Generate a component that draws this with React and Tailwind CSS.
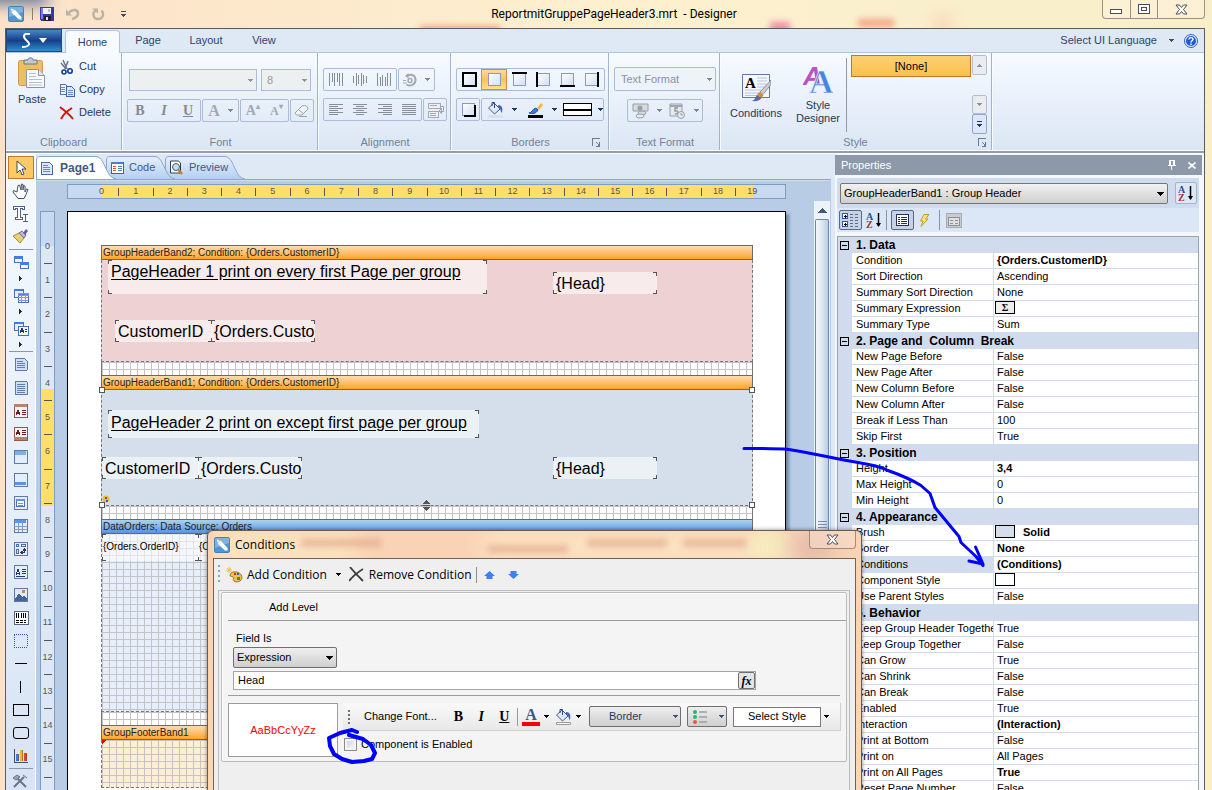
import React, { useState } from 'react';

const Icon = ({ w = 16, h = 16, crisp = true, className = '', children }) => (
  <svg
    width={w}
    height={h}
    viewBox={`0 0 ${w} ${h}`}
    fill="none"
    shapeRendering={crisp ? 'crispEdges' : 'auto'}
    className={`shrink-0 ${className}`}
    aria-hidden="true"
  >
    {children}
  </svg>
);

const Caret = ({ color = '#3b4f70', className = '' }) => (
  <Icon w={5} h={3} className={className}>
    <path d="M0 0h5v1H0zM1 1h3v1H1zM2 2h1v1H2z" fill={color} />
  </Icon>
);

const AppIcon = () => (
  <Icon w={16} h={16} crisp={false}>
    <rect x="0.5" y="0.5" width="15" height="15" rx="1.500" fill="#5296cf" stroke="#4482b8" />
    <path d="M1 1h14v5L1 11z" fill="#a5cbe8" opacity="0.55" />
    <path d="M3 2.500l4 1.500 6.500 7v2.500H11L4 7z" fill="#fff" />
    <path d="M3 6.500L6.500 3" stroke="#7fb2da" strokeWidth="0.800" />
  </Icon>
);

/* ---------- title bar ---------- */

const CloseGlyph = () => (
  <Icon w={13} h={11} crisp={false}>
    <path d="M1 1h3.500l2 2.500 2-2.500H12L8.500 5.500 12 10H8.500l-2-2.500-2 2.500H1l3.500-4.500z" fill="#fff" stroke="#4c4c5c" />
  </Icon>
);

const TitleBar = () => (
  <header className="relative flex h-7 shrink-0 items-center px-2">
    <div className="pointer-events-none absolute inset-0 overflow-hidden">
      <div className="absolute -left-4 -top-4 h-5 w-16 bg-[#5f7396] blur-sm" />
      <div className="absolute left-[420px] top-[26px] h-2 w-20 bg-[#f0a080] blur-[3px]" />
      <div className="absolute left-[770px] top-[22px] h-3 w-5 bg-[#ee8fa8] blur-[3px]" />
      <div className="absolute left-[858px] top-[19px] h-2 w-9 bg-[#f3a488] blur-[3px]" />
      <div className="absolute left-[935px] top-4 h-4 w-4 bg-[#f9cdb0] blur-sm" />
    </div>
    <div className="relative flex items-center">
      <AppIcon />
      <span className="ml-2 h-3 w-px bg-[#8a7f70]" />
      <button aria-label="Save" className="ml-[7px]">
        <Icon w={14} h={14}>
          <path d="M0 0h14v14H1L0 13z" fill="#3a35a8" />
          <path d="M1 1h2v11H1z" fill="#7d7be0" />
          <path d="M3 1h8v6H3z" fill="#f3f5fb" />
          <path d="M8 2h2v3H8z" fill="#b8bdd2" />
          <path d="M4 9h7v5H4z" fill="#20202c" />
          <path d="M6 10h2v3H6z" fill="#dfe2ee" />
        </Icon>
      </button>
      <button aria-label="Undo" className="ml-3">
        <Icon w={14} h={14} crisp={false}>
          <path d="M3 5.500c4-4 9-3 9 1C12 9.500 9.500 11 6 12" stroke="#bab2a3" strokeWidth="2.500" />
          <path d="M0 2.500v6h6z" fill="#bab2a3" />
        </Icon>
      </button>
      <button aria-label="Redo" className="ml-3">
        <Icon w={13} h={14} crisp={false}>
          <path d="M3.500 3.500C0 6 1 12 6 12c5 0 6.500-5 3.500-8.500" stroke="#bab2a3" strokeWidth="2.300" />
          <path d="M0 1.500h6v5z" fill="#bab2a3" />
        </Icon>
      </button>
      <button aria-label="Customize toolbar" className="ml-4">
        <Icon w={5} h={6}>
          <path d="M0 0h5v1H0zM0 3h5v1H0zM1 4h3v1H1zM2 5h1v1H2z" fill="#4a4a50" />
        </Icon>
      </button>
    </div>
    <h1 className="relative flex-1 whitespace-pre pl-5 pr-5 text-center font-['Roboto',sans-serif] text-xs text-black">
      ReportmitGruppePageHeader3.mrt  - Designer
    </h1>
    <div className="relative -mr-[1px] flex h-[19px] w-[103px] self-start rounded-b border border-t-0 border-[#9c9186] bg-[#fdf0dc]/60">
      <button aria-label="Minimize" className="flex flex-1 items-center justify-center border-r border-[#9c9186]">
        <span className="mt-1 h-[5px] w-3 border border-[#4c4c5c] bg-white" />
      </button>
      <button aria-label="Maximize" className="flex flex-1 items-center justify-center border-r border-[#9c9186]">
        <Icon w={12} h={10}>
          <path d="M0 0h12v10H0z" fill="#4c4c5c" />
          <path d="M1 1h10v8H1z" fill="#fff" />
          <path d="M3 3h6v4H3z" fill="#4c4c5c" />
          <path d="M4 4h4v2H4z" fill="#fff" />
        </Icon>
      </button>
      <button aria-label="Close" className="flex w-[46px] items-center justify-center">
        <CloseGlyph />
      </button>
    </div>
  </header>
);

/* ---------- ribbon ---------- */

const RibbonTabs = () => (
  <nav className="flex h-6 items-end border-b border-[#b0c4de] bg-[#dfe8f5] text-[#2b456e]">
    <button
      aria-label="Application menu"
      className="flex h-[23px] w-14 items-center justify-center gap-2 border border-[#1b4a8c] bg-linear-to-b from-[#4a86c8] via-[#173f87] via-50% to-[#2f8fce]"
    >
      <Icon w={9} h={15} crisp={false}>
        <path d="M8 1C3 0 1 2 2.500 5S8 9 7 11.500 3 14 0 14" stroke="#fff" strokeWidth="2" />
      </Icon>
      <Icon w={8} h={5} crisp={false}>
        <path d="M0 0h8L4 5z" fill="#fff" />
      </Icon>
    </button>
    <button className="-mb-px ml-[3px] h-[23px] w-[55px] rounded-t-sm border border-b-0 border-[#b0c4de] bg-[#f7fbff]">Home</button>
    <button className="h-[23px] w-14">Page</button>
    <button className="h-[23px] w-[60px]">Layout</button>
    <button className="h-[23px] w-14">View</button>
    <button className="ml-auto flex h-[23px] items-center gap-3">
      Select UI Language <Caret />
    </button>
    <button aria-label="Help" className="mb-1 ml-[10px] mr-[6px]">
      <Icon w={14} h={14} crisp={false}>
        <circle cx="7" cy="7" r="6.500" fill="#dfeafa" stroke="#3a62ad" />
        <circle cx="7" cy="7" r="5" fill="#1f5bd8" />
        <path d="M5 5.500C5 3 9 3 9 5.300 9 6.800 7 6.800 7 8.500M7 9.500V11" stroke="#fff" strokeWidth="1.400" />
      </Icon>
    </button>
  </nav>
);

const RibbonGroup = ({ title, launcher, className = '', children }) => (
  <section className={`flex shrink-0 flex-col border-r border-[#9fb3cf] shadow-[1px_0_0_#f8fbff] ${className}`}>
    <div className="min-h-0 flex-1">{children}</div>
    <footer className="relative h-4 text-center leading-4 text-[#71829b]">
      {title}
      {launcher && (
        <button aria-label={`${title} options`} className="absolute right-1 top-1">
          <Icon w={9} h={9}>
            <path d="M0 0h8v1H1v7H0zM4 4h1v1H4zM5 5h1v1H5zM8 4v5H4V8h3V4z" fill="#6b7c95" />
            <path d="M6 6h2v2H6z" fill="#6b7c95" />
          </Icon>
        </button>
      )}
    </footer>
  </section>
);

const Box = ({ className = '', children }) => (
  <div className={`flex h-[23px] items-center justify-around rounded-xs border border-[#a9bdd9] ${className}`}>{children}</div>
);

const FlatButton = ({ label, className = '', children }) => (
  <button aria-label={label} className={`flex h-full flex-1 items-center justify-center gap-2 ${className}`}>
    {children}
  </button>
);

const PasteIcon = () => (
  <Icon w={28} h={32} crisp={false}>
    <rect x="0.500" y="3.500" width="24" height="25" rx="2" fill="#efbd63" stroke="#c99a50" />
    <path d="M6 3h4c0-3 5-3 5 0h4v4H6z" fill="#c5c9ce" stroke="#6f7781" />
    <path d="M8.500 12.500h12l6 6v12h-18z" fill="#f7f9fc" stroke="#8b96a6" />
    <path d="M20.500 12.500v6h6" fill="#dfe6ef" stroke="#8b96a6" />
    <path d="M11 16.500h7M11 19.500h7M11 22.500h13M11 25.500h13M11 28h13" stroke="#b5bfcc" />
  </Icon>
);

const ClipboardGroup = () => (
  <RibbonGroup title="Clipboard" className="w-[116px]">
    <div className="flex">
      <button className="ml-2 flex w-9 flex-col items-center gap-[2px] pt-1">
        <PasteIcon />
        Paste
      </button>
      <div className="ml-[9px] flex flex-col pt-[2px]">
        <button className="flex h-[23px] items-center gap-1">
          <Icon w={16} h={16} crisp={false}>
            <path d="M4 1l4 9M9 2L6 10M2 4l5 6" stroke="#6b7684" strokeWidth="1.500" />
            <circle cx="5" cy="13" r="2" stroke="#123a9c" strokeWidth="1.600" />
            <circle cx="11" cy="12" r="2.200" stroke="#123a9c" strokeWidth="1.600" />
          </Icon>
          Cut
        </button>
        <button className="flex h-[23px] items-center gap-1">
          <Icon w={16} h={14}>
            <path d="M1 1h5l3 3v7H1z" fill="#eef3fb" stroke="#5b76a8" />
            <path d="M7 3h5l3 3v7H7z" fill="#dbe8fb" stroke="#3f62a8" />
            <path d="M2 4.500h4M2 6.500h4M2 8.500h4M9 7.500h5M9 9.500h5M9 11.500h5" stroke="#6f8fcd" />
          </Icon>
          Copy
        </button>
        <button className="flex h-[23px] items-center gap-1">
          <Icon w={16} h={14} crisp={false}>
            <path d="M1 1c4 3 9 7 13 12M13 2C8 5 4 9 2 13" stroke="#dd1010" strokeWidth="2" />
          </Icon>
          Delete
        </button>
      </div>
    </div>
  </RibbonGroup>
);

const FontGroup = () => (
  <RibbonGroup title="Font" className="w-[196px] pl-[5px] pr-[3px]">
    <div className="flex gap-1 px-[2px] pt-4">
      <div className="relative h-[22px] w-32">
        <select aria-label="Font name" disabled className="h-full w-full appearance-none border border-[#a9bdd9] bg-[#eeeff1]" />
        <Caret color="#8c96a5" className="absolute right-1 top-[10px]" />
      </div>
      <div className="relative h-[22px] w-[50px]">
        <select aria-label="Font size" disabled className="h-full w-full appearance-none border border-[#a9bdd9] bg-[#eeeff1] pl-[5px] text-[#9a9a9a] opacity-100">
          <option>8</option>
        </select>
        <Caret color="#8c96a5" className="absolute right-1 top-[10px]" />
      </div>
    </div>
    <div className="mt-2 flex gap-px font-['Liberation_Serif',serif] text-sm font-bold leading-none text-[#858a93]">
      <Box className="w-[74px]">
        <FlatButton label="Bold">B</FlatButton>
        <FlatButton label="Italic"><i>I</i></FlatButton>
        <FlatButton label="Underline"><u>U</u></FlatButton>
      </Box>
      <Box className="w-[37px]">
        <FlatButton label="Font color" className="text-base text-[#a3a8b2]">A<Caret color="#7c8797" /></FlatButton>
      </Box>
      <Box className="w-[49px] text-[#a3a8b2]">
        <FlatButton label="Grow font">A<span className="-ml-2 mb-2 text-[8px]">▴</span></FlatButton>
        <FlatButton label="Shrink font"><span className="text-xs">A</span><span className="-ml-2 mb-2 text-[8px]">▾</span></FlatButton>
      </Box>
      <Box className="w-[24px]">
        <Icon w={16} h={14} crisp={false}>
          <path d="M1 9l7-7c3-1 6 0 6 3l-6 6H3c-1 0-2-1-2-2z" fill="#f2f3f5" stroke="#9da3ac" />
          <path d="M5 6l5 4M5 12.500h8" stroke="#9da3ac" />
        </Icon>
      </Box>
    </div>
  </RibbonGroup>
);

const Bars = ({ d }) => (
  <Icon w={14} h={13}>
    <path d={d} stroke="#868e9b" />
  </Icon>
);

const AlignmentGroup = () => (
  <RibbonGroup title="Alignment" className="w-[133px] pl-[5px] pr-[3px]">
    <div className="flex gap-px pt-[15px]">
      <Box className="w-[74px]">
        <FlatButton label="Align top"><Bars d="M.5 0v13M3.500 0v9M5.500 0v13M8.500 0v9M10.500 0v13M13.500 0v13" /></FlatButton>
        <FlatButton label="Align middle"><Bars d="M.5 3v7M3.500 0v13M5.500 2v9M8.500 0v13M10.500 2v9M13.500 3v7" /></FlatButton>
        <FlatButton label="Align bottom"><Bars d="M.5 0v13M3.500 4v9M5.500 2v11M8.500 4v9M10.500 0v13M13.500 0v13" /></FlatButton>
      </Box>
      <Box className="w-[37px]">
        <FlatButton label="Rotate">
          <Icon w={14} h={14} crisp={false}>
            <path d="M5 2.500c4-2 7.500 0 7.500 4.500s-5 7-9 4.500" stroke="#a4a9b2" strokeWidth="2" />
            <circle cx="7" cy="7.500" r="2" stroke="#a4a9b2" strokeWidth="1.500" />
            <path d="M5.500 0v5.500L2 3z" fill="#a4a9b2" />
            <path d="M0 7.500h3M0 10h4" stroke="#a4a9b2" />
          </Icon>
          <Caret color="#7c8797" />
        </FlatButton>
      </Box>
    </div>
    <div className="mt-[7px] flex gap-px">
      <Box className="w-[99px]">
        <FlatButton label="Align left"><Bars d="M0 1.500h14M0 3.500h9M0 5.500h14M0 7.500h9M0 9.500h14M0 11.500h9" /></FlatButton>
        <FlatButton label="Align center"><Bars d="M0 1.500h14M3 3.500h8M0 5.500h14M3 7.500h8M0 9.500h14M3 11.500h8" /></FlatButton>
        <FlatButton label="Align right"><Bars d="M0 1.500h14M5 3.500h9M0 5.500h14M5 7.500h9M0 9.500h14M5 11.500h9" /></FlatButton>
        <FlatButton label="Justify"><Bars d="M0 1.500h14M0 3.500h14M0 5.500h14M0 7.500h14M0 9.500h14M0 11.500h14" /></FlatButton>
      </Box>
      <Box className="w-6">
        <Icon w={17} h={16}>
          <path d="M1 1h12v5H1zM1 9h10v6H1z" fill="#eef0f3" stroke="#a4a9b2" />
          <path d="M3 3h7M3 11h6M3 13h6M13 4h3v5h-3M12 9l2-2v4z" stroke="#a4a9b2" />
        </Icon>
      </Box>
    </div>
  </RibbonGroup>
);

const BorderIcon = ({ thick }) => (
  <Icon w={15} h={15}>
    <defs>
      <linearGradient id="borderFill" x1="0" y1="0" x2="1" y2="1">
        <stop offset="0" stopColor="#fff" />
        <stop offset="1" stopColor="#d3def3" />
      </linearGradient>
    </defs>
    <path d="M1.500 1.500h12v12h-12z" fill="url(#borderFill)" stroke="#8e97c4" />
    {thick && <path d={thick} fill="#000" fillRule="evenodd" />}
  </Icon>
);

const BucketIcon = ({ line = '#d9e0ec' }) => (
  <Icon w={17} h={17} crisp={false}>
    <path d="M1.500 7L7 2l6 6-5.500 5z" fill="#dfe8f6" stroke="#445a86" />
    <path d="M5 5V1.500h2.500V7" stroke="#2c4b86" />
    <path d="M11 4c4 0 5 3 4 8-2-2-1-5-4-6z" fill="#3a66b8" />
    <path d="M1.500 14.500h14v2h-14z" fill={line} stroke={line === '#d9e0ec' ? line : '#999'} />
  </Icon>
);

const BordersGroup = () => (
  <RibbonGroup title="Borders" launcher className="w-[158px] pl-[5px] pr-[3px]">
    <div className="flex pt-[15px]">
      <Box className="w-[149px]">
        <FlatButton label="All borders"><BorderIcon thick="M0 0h15v15H0zM2 2v11h11V2z" /></FlatButton>
        <FlatButton label="No border" className="border border-[#c59342] bg-linear-to-b from-[#fbd9a8] via-[#ffbf5d] to-[#ffe28a]"><BorderIcon /></FlatButton>
        <FlatButton label="Top border"><BorderIcon thick="M0 0h15v2H0z" /></FlatButton>
        <FlatButton label="Left border"><BorderIcon thick="M0 0h2v15H0z" /></FlatButton>
        <FlatButton label="Bottom border"><BorderIcon thick="M0 13h15v2H0z" /></FlatButton>
        <FlatButton label="Right border"><BorderIcon thick="M13 0h2v15h-2z" /></FlatButton>
      </Box>
    </div>
    <div className="mt-[7px] flex gap-px">
      <Box className="w-6"><BorderIcon thick="M13 3h2v12H3v-2h10z" /></Box>
      <Box className="w-[123px]">
        <FlatButton label="Fill color"><BucketIcon /><Caret color="#1f3560" /></FlatButton>
        <FlatButton label="Border color">
          <Icon w={16} h={16} crisp={false}>
            <path d="M1 11c3 0 3-4 7-5l2 2c-2 4-6 4-9 3z" fill="#3a7ad6" stroke="#2450a0" />
            <path d="M9 6l4-5 2 2-4 5z" fill="#f0b840" />
            <path d="M0 13h15v3H0z" fill="#000" />
          </Icon>
          <Caret color="#1f3560" />
        </FlatButton>
        <FlatButton label="Border style" className="gap-[6px]">
          <span className="flex h-[13px] w-[29px] shrink-0 items-center border border-black bg-white"><span className="h-[2px] w-full bg-black" /></span>
          <Caret color="#1f3560" />
        </FlatButton>
      </Box>
    </div>
  </RibbonGroup>
);

const TextFormatGroup = () => (
  <RibbonGroup title="Text Format" className="w-[111px] pl-[5px] pr-[3px]">
    <div className="relative mt-[14px] h-6">
      <select aria-label="Text format" className="h-full w-full appearance-none rounded-xs border border-[#a9bdd9] bg-[#eef3fa] pl-[6px] text-[#8a92a0]">
        <option>Text Format</option>
      </select>
      <Caret color="#7c8797" className="absolute right-1 top-[11px]" />
    </div>
    <Box className="mx-auto mt-2 w-[76px]">
      <FlatButton label="Currency format">
        <Icon w={17} h={16} crisp={false}>
          <path d="M1 1h15v7H1z" fill="#d8dade" stroke="#9a9fa8" />
          <circle cx="8" cy="5" r="2.500" fill="#9a9fa8" />
          <ellipse cx="10" cy="10" rx="4" ry="2" fill="#d8dade" stroke="#9a9fa8" />
          <ellipse cx="8" cy="13" rx="4" ry="2" fill="#e8e9eb" stroke="#9a9fa8" />
        </Icon>
        <Caret color="#7c8797" />
      </FlatButton>
      <FlatButton label="Date format">
        <Icon w={17} h={16} crisp={false}>
          <path d="M1 1h12v12H1z" fill="#e8e9eb" stroke="#9a9fa8" />
          <path d="M1 3h12M9 5H6v3c4-1 4 3 0 3" stroke="#8b9099" strokeWidth="1.300" />
          <circle cx="12" cy="12" r="3.500" fill="#e8e9eb" stroke="#9a9fa8" />
          <path d="M12 10v2h2" stroke="#9a9fa8" />
        </Icon>
        <Caret color="#7c8797" />
      </FlatButton>
    </Box>
  </RibbonGroup>
);

const StyleGroup = () => (
  <RibbonGroup title="Style" launcher className="w-[272px]">
    <div className="flex">
      <button className="ml-2 flex w-14 flex-col items-center gap-[3px] pt-5">
        <Icon w={30} h={29} crisp={false}>
          <path d="M1.500 1.500h27v23h-27z" fill="#f4f7fd" stroke="#6277a8" />
          <path d="M16 5h10M16 8h10M16 11h10M16 14h8M4 17h16M4 20h14M4 22.500h12" stroke="#b7c4e0" />
          <text x="4" y="15" fontFamily="Liberation Serif, serif" fontSize="15" fontWeight="700" fill="#000">A</text>
          <path d="M30 7L19 19l3 2.500 8-10z" fill="#c9ccd2" stroke="#777" strokeWidth="0.700" />
          <path d="M18 19l4.500 3-2 3-4.500-3z" fill="#d88a2c" />
          <path d="M16 22l4.500 3c-2 3-6 3.500-10 3 4-1 3.500-4 5.500-6z" fill="#5f66a8" />
        </Icon>
        Conditions
      </button>
      <button className="ml-1 flex w-[60px] flex-col items-center gap-1 pt-3 leading-[13px]">
        <Icon w={30} h={30} crisp={false}>
          <text x="0" y="20" fontFamily="Liberation Sans, sans-serif" fontSize="26" fontStyle="italic" fontWeight="700" fill="#b652c4">A</text>
          <text x="6" y="28" fontFamily="Liberation Serif, serif" fontSize="34" fontWeight="700" fill="#4a86d8" stroke="#eef4fc" strokeWidth="0.600">A</text>
        </Icon>
        <span>Style<br />Designer</span>
      </button>
      <div className="ml-[-2px] mt-[5px] h-[74px] w-px bg-[#8e98a8]" />
      <button className="ml-1 mt-[2px] h-[22px] w-[120px] border border-[#c2762b] bg-linear-to-b from-[#fdcf73] to-[#fbc04b] text-black">[None]</button>
      <div className="ml-px mt-[2px] flex w-[15px] flex-col">
        <button aria-label="Scroll up" className="flex h-5 items-center justify-center rounded-xs border border-[#b9bec6] bg-[#e9ecf1]">
          <Caret color="#8c939e" className="rotate-180" />
        </button>
        <button aria-label="Scroll down" className="mt-5 flex h-[19px] items-center justify-center rounded-xs border border-[#b9bec6] bg-[#e9ecf1]">
          <Caret color="#8c939e" />
        </button>
        <button aria-label="More styles" className="flex h-5 items-center justify-center rounded-xs border border-[#8ea6cd] bg-[#dce8f8]">
          <Icon w={5} h={6}><path d="M0 0h5v1H0zM0 3h5v1H0zM1 4h3v1H1zM2 5h1v1H2z" fill="#1f3560" /></Icon>
        </button>
      </div>
    </div>
  </RibbonGroup>
);

const Ribbon = () => (
  <div className="shrink-0 text-[11px]">
    <RibbonTabs />
    <div className="flex h-[98px] border-b border-[#f8fbff] bg-linear-to-b from-[#f7fbff] via-[#e9f0fa] to-[#dbe6f4] text-[#1e395b]">
      <ClipboardGroup />
      <FontGroup />
      <AlignmentGroup />
      <BordersGroup />
      <TextFormatGroup />
      <StyleGroup />
    </div>
    <div className="h-[3px] border-b border-[#f8fbff] bg-[#939ead]" />
  </div>
);

/* ---------- toolbox ---------- */

const Sheet = ({ children, fill = '#e4edfb', stroke = '#6079a8' }) => (
  <Icon w={15} h={15}>
    <path d="M1 1h13v13H1z" fill={fill} stroke={stroke} />
    {children}
  </Icon>
);

const GroupIcon = ({ kind }) => (
  <Icon w={16} h={15}>
    <path d="M1 1h9v8H1z" fill="#e9f0fb" stroke="#4a6fb8" />
    <path d="M1 1h9v2H1z" fill="#3d7fe0" />
    <path d="M5 5h10v9H5z" fill="#f3f7fd" stroke="#4a6fb8" />
    {kind === 'table' && <path d="M5 5h10v2H5zM5 9.500h10M5 12h10M8.500 5v9M12 5v9" fill="#3d7fe0" stroke="#7e9bd0" />}
    {kind === 'text' && <path d="M7 12l2-5 2 5M8 10h3M12 8h2M12 10h2" stroke="#20386e" />}
  </Icon>
);

const TOOLS = [
  { label: 'Select', active: true, icon: (
    <Icon w={12} h={16} crisp={false}><path d="M2 1v12l3-3 2 5 2-1-2-5h4z" fill="#fff" stroke="#3c4a66" /></Icon>
  ) },
  { label: 'Hand', icon: (
    <Icon w={17} h={16} crisp={false}>
      <path d="M5 9L1.500 7.500 1 9l4 5 1 1.500h6l2-4 2-5-1.500-.5-1.500 3V3l-1.500-.5L11 7V1.500L9.500 1 9 7 7.500 2 6 2.500z" fill="#fff" stroke="#44506a" />
    </Icon>
  ) },
  { label: 'Text editor', icon: (
    <Icon w={17} h={17}><path d="M1 4V1h11v3h-2V3H8v9h2v2H3v-2h2V3H3v1z" fill="#fff" stroke="#4d6187" /><path d="M11 9h5M13.500 9v7M11 16h5" stroke="#4d6187" /></Icon>
  ) },
  { label: 'Style brush', icon: (
    <Icon w={17} h={15} crisp={false}>
      <path d="M1 7l6-3 5 5-4 5z" fill="#ecd070" stroke="#a38a3c" />
      <path d="M7 4l3-2 4 4-2 3z" fill="#b9bec6" stroke="#6d7480" />
      <path d="M11 4l3-4 2 2-3 4z" fill="#6a58b4" />
    </Icon>
  ) },
  'sep',
  { label: 'Bands', icon: (
    <Icon w={16} h={13}>
      <path d="M1 1h8v5H1z" fill="#f3f7fd" stroke="#4a6fb8" /><path d="M1 0h9v3H1z" fill="#3d7fe0" />
      <path d="M7 7h8v5H7z" fill="#f3f7fd" stroke="#4a6fb8" /><path d="M7 6h9v3H7z" fill="#3d7fe0" />
    </Icon>
  ) },
  'more',
  { label: 'Cross bands', icon: <GroupIcon kind="table" /> },
  'more',
  { label: 'Components', icon: <GroupIcon kind="text" /> },
  'more',
  'sep',
  { label: 'Report title', icon: <Icon w={14} h={15}><path d="M1 1h9l3 3v9l-2 1-2-1-2 1-2-1-2 1-2-1z" fill="#cfdff6" stroke="#6079a8" /><path d="M3 4.500h6M3 6.500h8M3 8.500h8M3 10.500h8" stroke="#6580b0" /></Icon> },
  { label: 'Report summary', icon: <Icon w={14} h={15}><path d="M1 2l2-1 2 1 2-1 2 1 2-1 2 1v12H1z" fill="#cfdff6" stroke="#6079a8" /><path d="M3 4.500h8M3 6.500h8M3 8.500h8M3 10.500h8M3 12.500h8" stroke="#6580b0" /></Icon> },
  { label: 'Page header', icon: <Sheet stroke="#8c5a50" fill="#fbf4f2"><path d="M1 1h13v3H1z" fill="#b8826f" /><path d="M3 12l2-5 2 5M4 10h3M9 7h4M9 9h4M9 11h4" stroke="#6d1e1e" /></Sheet> },
  { label: 'Page footer', icon: <Sheet stroke="#8c5a50" fill="#fbf4f2"><path d="M1 11h13v3H1z" fill="#b8826f" /><path d="M3 9l2-5 2 5M4 7h3M9 4h4M9 6h4M9 8h4" stroke="#6d1e1e" /></Sheet> },
  { label: 'Header', icon: <Sheet><path d="M2 2h11v4H2z" fill="#7fadf0" /></Sheet> },
  { label: 'Footer', icon: <Sheet><path d="M2 10h11v3H2z" fill="#5b94ea" /></Sheet> },
  { label: 'Data', icon: <Sheet><path d="M3.500 4.500h8v7h-8z" fill="#fff" stroke="#4a6fb8" /><path d="M3 4h9v2H3z" fill="#5b94ea" /><path d="M5 8.500h5M5 10.500h5" stroke="#6f8fcd" /></Sheet> },
  { label: 'Table', icon: <Sheet><path d="M2 2h11v3H2z" fill="#5b94ea" /><path d="M1 8h13M1 11h13M5 5v9M9.500 5v9" stroke="#7e9bd0" /></Sheet> },
  { label: 'Cross tab', icon: <Sheet><path d="M3.500 3.500h2v2h-2zM8 3.500h4v2H8zM3.500 8h2v4h-2z" stroke="#4a6fb8" /><path d="M8 11.500h3.500V8M10 9.500l1.500-2 1.500 2M9.500 10l-2 1.500 2 1.500" stroke="#20386e" /></Sheet> },
  { label: 'Text', icon: <Sheet><path d="M3 11l2-6 2 6M4 9h3M9 5h4M9 7h4M9 9h4M3 12h9" stroke="#20386e" /></Sheet> },
  { label: 'Image', icon: <Sheet fill="#dfeafb"><path d="M2 12l4-6 3 4 2-2 3 4v2H2z" fill="#46639c" /><path d="M9 3h3v3H9z" fill="#e07a3a" /></Sheet> },
  { label: 'Bar code', icon: <Icon w={16} h={15}><path d="M1 1h14v13H1z" fill="#fff" stroke="#5b6778" /><path d="M3.500 3v5M5.500 3v5M8 3v5M10.500 3v5M12.500 3v5M3 10.500h3M7 10.500h3M11 10.500h2M3 12.500h3M7 12.500h3M11 12.500h2" stroke="#000" /></Icon> },
  { label: 'Panel', icon: <Icon w={15} h={15}><path d="M1 1h13v13H1z" fill="#dde9fa" stroke="#2f57b0" strokeDasharray="1 1" /></Icon> },
  { label: 'Horizontal line', icon: <Icon w={12} h={1}><path d="M0 0h12v1H0z" fill="#000" /></Icon> },
  { label: 'Vertical line', icon: <Icon w={1} h={12}><path d="M0 0h1v12H0z" fill="#000" /></Icon> },
  { label: 'Rectangle', icon: <Icon w={16} h={12}><path d="M0.500 0.500h15v11h-15z" stroke="#000" /></Icon> },
  { label: 'Rounded rectangle', icon: <Icon w={16} h={12} crisp={false}><rect x="0.500" y="0.500" width="15" height="11" rx="2.500" stroke="#000" /></Icon> },
  { label: 'Chart', icon: <Icon w={16} h={15}><path d="M1 1v13h14" stroke="#44506a" /><path d="M3 6h3v7H3z" fill="#3c7be0" /><path d="M7 2h3v11H7z" fill="#f0b52c" /><path d="M11 5h3v8h-3z" fill="#d9442e" /><path d="M5 6h1v7H5zM9 2h1v11H9zM13 5h1v8h-1z" fill="#7a3a20" opacity="0.500" /></Icon> },
  'sep',
  { label: 'Tools', icon: <Icon w={17} h={15} crisp={false}><path d="M2 13L12 3M4 3l10 10" stroke="#69748a" strokeWidth="2" /><path d="M1 4l4-3 3 2-4 3zM11 1l4 3" fill="#9aa4b6" stroke="#69748a" /></Icon> },
];

const Toolbox = () => (
  <aside className="flex w-[30px] shrink-0 flex-col items-center border-r border-white bg-linear-to-b from-[#f6faff] to-[#d8e4f4] pt-[2px]">
    {TOOLS.map((tool, i) => {
      if (tool === 'sep') return <div key={i} className="my-px h-px w-6 shrink-0 bg-[#8e98a8]" />;
      if (tool === 'more') {
        return (
          <Icon key={i} w={3} h={10}>
            <path d="M0 2h1v5H0zM1 3h1v3H1zM2 4h1v1H2z" fill="#1c2b48" />
          </Icon>
        );
      }
      return (
        <button
          key={tool.label}
          aria-label={tool.label}
          className={`flex h-[23px] w-[26px] shrink-0 items-center justify-center ${tool.active ? 'border border-[#c2762b] bg-[#fdc964]' : ''}`}
        >
          {tool.icon}
        </button>
      );
    })}
  </aside>
);

/* ---------- report page ---------- */

const DocTab = ({ className, width, active, icon, children }) => (
  <button className={`relative h-[23px] text-left ${className}`}>
    <svg className="absolute inset-0" width={width} height="23" viewBox={`0 0 ${width} 23`} aria-hidden="true">
      <defs>
        <linearGradient id="tabFill" x1="0" y1="0" x2="0" y2="1">
          <stop offset="0" stopColor="#e6f0fc" />
          <stop offset="1" stopColor="#b4cff2" />
        </linearGradient>
      </defs>
      <path
        d={`M.5 23V4C.5 1.500 2 .5 4 .5H${width - 20}c6 0 8 9 12 16 2 4 4 5.500 8 6.500`}
        fill={active ? '#fff' : 'url(#tabFill)'}
        stroke="#8fa6c8"
      />
    </svg>
    <span className="relative flex items-center gap-[5px] pl-1">
      {icon}
      {children}
    </span>
  </button>
);

const DocTabs = () => (
  <div className="flex h-[26px] shrink-0 items-end border-b border-[#8fa6c8] bg-[#dfe8f5] text-[11px] text-[#44597d]">
    <DocTab className="z-20 w-[70px] text-xs font-bold" width={80} active icon={
      <Icon w={13} h={14}><path d="M1 1h8l3 3v9H1z" fill="#dce8fa" stroke="#4f6a9c" /><path d="M3 4.500h5M3 6.500h7M3 8.500h7M3 10.500h7" stroke="#6c87ba" /></Icon>
    }>
      <span className="ml-[2px]">Page1</span>
    </DocTab>
    <DocTab className="z-10 w-[59px]" width={69} icon={
      <Icon w={14} h={13}><path d="M1 1h12v11H1z" fill="#fff" stroke="#3c62a8" /><path d="M1 1h12v2H1z" fill="#4a7ed0" /><path d="M3 5.500h3M3 7.500h3M3 9.500h3" stroke="#d05a2e" /><path d="M8 5.500h4M8 7.500h4M8 9.500h4" stroke="#5878b8" /></Icon>
    }>
      Code
    </DocTab>
    <DocTab className="w-[80px]" width={80} icon={
      <Icon w={15} h={15} crisp={false}><path d="M1.500 1h8l2 2v10h-10z" fill="#fff" stroke="#333f55" /><circle cx="7" cy="7" r="3.500" fill="#bfe0f0" stroke="#4d5a6e" /><path d="M9.500 10l3.500 4" stroke="#c87a28" strokeWidth="2.500" /></Icon>
    }>
      Preview
    </DocTab>
  </div>
);

const HorizontalRuler = () => (
  <div className="flex h-[15px] w-[719px] overflow-hidden border border-[#7f9cc4] bg-[linear-gradient(to_right,#c8daf0_34px,#ffdf67_34px,#ffdf67_685px,#c8daf0_685px)] pl-4">
    <div className="flex w-[685px] shrink-0 text-[9px] leading-[13px] text-[#555]">
      {Array.from({ length: 20 }, (_, n) => (
        <div key={n} className="flex flex-1 items-center">
          <span className={`h-2 w-px ${n ? 'bg-[#555]' : ''}`} />
          <span className="flex-1 text-center">{n}</span>
        </div>
      ))}
    </div>
  </div>
);

const VerticalRuler = () => (
  <div className="w-[15px] shrink-0 overflow-hidden border border-b-0 border-[#7f9cc4] bg-[linear-gradient(to_bottom,#c8daf0_34px,#dde8f6_34px,#dde8f6_177px,#ffdf67_177px,#ffdf67_294px,#dde8f6_294px)] pt-[17px]">
    <div className="flex h-[582px] flex-col text-[9px] text-[#555]">
      {Array.from({ length: 17 }, (_, n) => (
        <div key={n} className="flex flex-1 flex-col items-center">
          <span className={`h-px w-2 ${n ? 'bg-[#555]' : ''}`} />
          {n < 16 && <span className="flex flex-1 items-center">{n}</span>}
        </div>
      ))}
    </div>
  </div>
);

const Field = ({ className = '', children }) => (
  <div className={`absolute overflow-hidden whitespace-nowrap bg-white/55 ${className}`}>
    {children}
    <span className="absolute left-0 top-0 size-1 border-l border-t border-[#555]" />
    <span className="absolute right-0 top-0 size-1 border-r border-t border-[#555]" />
    <span className="absolute bottom-0 left-0 size-1 border-b border-l border-[#555]" />
    <span className="absolute bottom-0 right-0 size-1 border-b border-r border-[#555]" />
  </div>
);

const BandHeader = ({ blue, children }) => (
  <div
    className={`h-[15px] border border-[#6f6a60] px-px text-[10px] leading-[13px] text-[#222] ${
      blue ? 'bg-linear-to-b from-[#a9d3ee] to-[#5b92e2]' : 'bg-linear-to-b from-[#ffdcaa] to-[#ffa30e]'
    }`}
  >
    {children}
  </div>
);

const GRID = 'bg-[linear-gradient(to_right,#c4c4c4_1px,transparent_1px),linear-gradient(to_bottom,#c4c4c4_1px,transparent_1px)] bg-[size:7px_7px]';

const Gap = () => <div className={`h-[13px] border-x border-[#777] bg-white ${GRID}`} />;

const Handle = ({ className }) => <span className={`absolute z-10 size-[6px] border border-[#555] bg-white ${className}`} />;

const ReportPage = () => (
  <div className="w-[719px] shrink-0 border border-b-0 border-black bg-white pl-[33px] pr-8 pt-[33px] shadow-[3px_3px_3px_#6f84a5]">
    <BandHeader>GroupHeaderBand2; Condition: {'{Orders.CustomerID}'}</BandHeader>
    <div className="relative h-[102px] border border-t-0 border-dashed border-[#777] bg-[#eed2d3] text-base leading-6 text-black">
      <Field className="left-[6px] top-0 h-[34px] w-[379px] pl-[3px] underline underline-offset-2">PageHeader 1 print on every first Page per group</Field>
      <Field className="left-[451px] top-3 h-[22px] w-[104px] pl-[3px]">{'{Head}'}</Field>
      <Field className="left-[13px] top-[60px] h-[22px] w-[97px] pl-[3px]">CustomerID</Field>
      <Field className="left-[109px] top-[60px] h-[22px] w-[104px] pl-[3px]">{'{Orders.Custo'}</Field>
    </div>
    <Gap />
    <BandHeader>GroupHeaderBand1; Condition: {'{Orders.CustomerID}'}</BandHeader>
    <div className="relative h-[116px] border border-t-0 border-dashed border-[#777] bg-[#d5dfeb] text-base leading-6 text-black">
      <Handle className="-left-[3px] -top-[3px]" />
      <Handle className="-right-[3px] -top-[3px]" />
      <Handle className="-bottom-[3px] -left-[3px]" />
      <Handle className="-bottom-[3px] -right-[3px]" />
      <Field className="left-[6px] top-5 h-7 w-[371px] pl-[3px] pt-px underline underline-offset-2">PageHeader 2 print on except first page per group</Field>
      <Field className="left-0 top-[67px] h-[22px] w-[97px] pl-[3px]">CustomerID</Field>
      <Field className="left-24 top-[67px] h-[22px] w-[104px] pl-[3px]">{'{Orders.Custo'}</Field>
      <Field className="left-[451px] top-[67px] h-[22px] w-[104px] pl-[3px]">{'{Head}'}</Field>
      <Icon w={8} h={8} crisp={false} className="absolute bottom-[2px] left-0">
        <circle cx="4" cy="4" r="3.500" fill="#e8bd3e" />
        <path d="M3 2h2v2H3z" fill="#c33" />
        <path d="M4 5h2v2H4z" fill="#36c" />
      </Icon>
      <Icon w={7} h={11} className="absolute -bottom-[6px] left-[321px]">
        <path d="M3 0h1v1h1v1h1v1h1v1H0V3h1V2h1V1h1zM0 5h7v1H0zM0 7h7v1H6v1H5v1H4v1H3v-1H2V9H1V8H0z" fill="#555" />
      </Icon>
    </div>
    <Gap />
    <BandHeader blue>DataOrders; Data Source: Orders</BandHeader>
    <div className={`relative h-[178px] border border-t-0 border-dashed border-[#777] bg-[#e6edfb] text-[10px] leading-[26px] text-black ${GRID}`}>
      <Field className="left-0 top-0 h-[27px] w-[97px] pl-px">{'{Orders.OrderID}'}</Field>
      <Field className="left-24 top-0 h-[27px] w-[97px] pl-px">{'{O'}</Field>
    </div>
    <Gap />
    <BandHeader>GroupFooterBand1</BandHeader>
    <div className={`relative h-12 border border-t-0 border-dashed border-[#777] bg-[#feeed6] ${GRID}`}>
      <Icon w={4} h={4} className="absolute left-0 top-0"><path d="M0 0h4L0 4z" fill="#e00" /></Icon>
    </div>
    <div className="h-5" />
  </div>
);

const DesignSurface = () => (
  <main className="flex min-w-0 flex-1 flex-col bg-[#b8cce6]">
    <DocTabs />
    <div className="flex min-h-0 flex-1 overflow-hidden border-t border-[#cfdcee]">
      <div className="flex min-w-0 flex-1 flex-col pt-[3px]">
        <div className="pl-[31px]"><HorizontalRuler /></div>
        <div className="mt-3 flex min-h-0 flex-1 gap-3 overflow-hidden pl-1">
          <VerticalRuler />
          <ReportPage />
        </div>
      </div>
      <div className="mr-px mt-5 flex w-4 shrink-0 flex-col bg-[#eef3fa]">
        <button aria-label="Scroll up" className="flex h-[18px] items-center justify-center">
          <Icon w={9} h={5}><path d="M4 0h1v1h1v1h1v1h1v1h1v1H0V4h1V3h1V2h1V1h1z" fill="#43587f" /></Icon>
        </button>
        <div className="mx-px flex flex-1 items-center justify-center rounded-t-xs border border-b-0 border-[#6e86b4] bg-linear-to-r from-[#f2f6fc] via-[#dfe7f3] to-[#bccbe2]">
          <Icon w={9} h={8} className="mt-10"><path d="M0 .5h9M0 3.500h9M0 6.500h9" stroke="#7d8fae" /></Icon>
        </div>
      </div>
    </div>
  </main>
);

/* ---------- properties ---------- */

const Swatch = ({ className = 'bg-white', children }) => (
  <span className={`inline-flex h-[13px] w-5 items-center justify-center border border-black align-top text-[10px] leading-none ${className}`}>{children}</span>
);

const SECTIONS = [
  { title: '1. Data', rows: [
    ['Condition', '{Orders.CustomerID}', true],
    ['Sort Direction', 'Ascending'],
    ['Summary Sort Direction', 'None'],
    ['Summary Expression', <Swatch className="-ml-[2px] bg-[#eee] font-['Liberation_Serif',serif] font-bold">Σ</Swatch>],
    ['Summary Type', 'Sum'],
  ] },
  { title: '2. Page and  Column  Break', rows: [
    ['New Page Before', 'False'],
    ['New Page After', 'False'],
    ['New Column Before', 'False'],
    ['New Column After', 'False'],
    ['Break if Less Than', '100'],
    ['Skip First', 'True'],
  ] },
  { title: '3. Position', rows: [
    ['Height', '3,4', true],
    ['Max Height', '0'],
    ['Min Height', '0'],
  ] },
  { title: '4. Appearance', rows: [
    ['Brush', <><Swatch className="-ml-[2px] mr-2 bg-[#d5dfeb]" />Solid</>, true],
    ['Border', 'None', true],
    ['Conditions', '(Conditions)', true],
    ['Component Style', <Swatch className="-ml-[2px] bg-white" />],
    ['Use Parent Styles', 'False'],
  ] },
  { title: '5. Behavior', rows: [
    ['Keep Group Header Together', 'True'],
    ['Keep Group Together', 'False'],
    ['Can Grow', 'True'],
    ['Can Shrink', 'False'],
    ['Can Break', 'False'],
    ['Enabled', 'True'],
    ['Interaction', '(Interaction)', true],
    ['Print at Bottom', 'False'],
    ['Print on', 'All Pages'],
    ['Print on All Pages', 'True', true],
    ['Reset Page Number', 'False'],
  ] },
];

const PropertyGrid = () => (
  <div className="mr-[3px] mt-1 min-h-0 flex-1 overflow-hidden border border-b-0 border-[#9da2ab] bg-white">
    <table className="w-full table-fixed border-separate border-spacing-0 text-[11px] leading-[15px] text-black">
      <colgroup>
        <col className="w-[14px]" />
        <col className="w-[142px]" />
        <col />
      </colgroup>
      {SECTIONS.map(section => (
        <tbody key={section.title}>
          <tr className="h-4 bg-[#d0dcee]">
            <td className="p-0 pl-[2px]">
              <Icon w={9} h={9}><path d="M.5.5h8v8h-8zM2 4.500h5" stroke="#000" /></Icon>
            </td>
            <th colSpan={2} className="whitespace-pre p-0 pl-1 text-left text-xs font-bold leading-4">{section.title}</th>
          </tr>
          {section.rows.map(([name, value, bold]) => (
            <tr key={name} className="h-4">
              <td className="bg-[#d0dcee] p-0" />
              <td className={`overflow-hidden whitespace-nowrap border-b border-r border-[#d0dcee] p-0 pl-1 ${name === 'Conditions' ? 'bg-[#d0dcee]' : ''}`}>{name}</td>
              <td className={`overflow-hidden whitespace-nowrap border-b border-[#d0dcee] p-0 pl-[3px] ${bold ? 'font-bold' : ''}`}>{value}</td>
            </tr>
          ))}
        </tbody>
      ))}
    </table>
  </div>
);

const SortIcon = () => (
  <Icon w={16} h={16} crisp={false}>
    <text x="0" y="8" fontFamily="Liberation Serif, serif" fontSize="10" fontWeight="700" fill="#2c4fa0">A</text>
    <text x="0" y="16" fontFamily="Liberation Serif, serif" fontSize="10" fontWeight="700" fill="#a8322a">Z</text>
    <path d="M12.500 1v13" stroke="#000" strokeWidth="1.500" />
    <path d="M10 11h5l-2.500 4z" fill="#000" />
  </Icon>
);

const PropertiesPanel = () => (
  <aside className="ml-1 flex w-[369px] shrink-0 flex-col bg-[#f4f8fd] pr-[2px]">
    <div className="mt-px flex h-5 shrink-0 items-center bg-[#8d99a9] px-[6px] text-[11px] text-white">
      <h2 className="flex-1">Properties</h2>
      <button aria-label="Pin"><Icon w={8} h={10}><path d="M1 0h6v5h1v1H0V5h1zM3 1v4h2V1zM3 6h1v4H3z" fill="#fff" fillRule="evenodd" /></Icon></button>
      <button aria-label="Close panel" className="ml-3"><Icon w={8} h={7} crisp={false}><path d="M.5.5l7 6M7.500.5l-7 6" stroke="#fff" strokeWidth="1.600" /></Icon></button>
    </div>
    <div className="ml-[2px] mt-[3px] flex min-h-0 flex-1 flex-col">
      <div className="mr-[3px] flex h-[30px] shrink-0 items-center gap-[7px] bg-[#d0dcee] pl-[3px] pr-[2px]">
        <div className="relative h-[21px] flex-1">
          <select aria-label="Selected component" className="h-full w-full appearance-none rounded-xs border border-[#767676] bg-linear-to-b from-[#f2f2f2] to-[#cfcfcf] pl-[3px] text-[11px] text-black">
            <option>GroupHeaderBand1 : Group Header</option>
          </select>
          <Icon w={7} h={4} className="absolute right-1 top-[9px]"><path d="M0 0h7v1H0zM1 1h5v1H1zM2 2h3v1H2zM3 3h1v1H3z" fill="#000" /></Icon>
        </div>
        <button aria-label="Sort components" className="flex size-[22px] items-center justify-center rounded-xs border border-[#a0b4d4] bg-[#dde8f7]"><SortIcon /></button>
      </div>
      <div className="mr-[3px] flex h-6 shrink-0 items-center bg-[#dbe7f7] pl-[2px]">
        <button aria-label="Categorized" className="flex h-5 w-[23px] items-center justify-center rounded-xs border border-[#5c6880] bg-[#c5d3e8]">
          <Icon w={17} h={15}>
            <path d="M.5.5h5v5h-5zM.5 8.500h5v5h-5z" fill="#fff" stroke="#2f57a0" />
            <path d="M2 3h2.500M3 2v2.500M2 11h2.500M3 10v2.500" stroke="#000" />
            <path d="M8 1.500h3M8 4.500h3M8 7.500h3M8 10.500h3M8 13.500h3M13 1.500h3M13 4.500h3M13 7.500h3M13 10.500h3M13 13.500h3" stroke="#5f6f8b" />
          </Icon>
        </button>
        <button aria-label="Alphabetical" className="ml-1"><SortIcon /></button>
        <span className="mx-1 h-5 w-px bg-[#8a94a6]" />
        <button aria-label="Properties" className="flex h-5 w-[23px] items-center justify-center rounded-xs border border-[#5c6880] bg-[#c5d3e8]">
          <Icon w={13} h={12}><path d="M.5.5h12v11H.5z" fill="#fff" stroke="#20305a" /><path d="M2 3h2M2 5h2M2 7h2M2 9h2M5 3h6M5 5h6M5 7h6M5 9h6" stroke="#20305a" /></Icon>
        </button>
        <button aria-label="Events" className="ml-[5px]"><Icon w={11} h={13} crisp={false}><path d="M5 .5h5L6.500 5H9L2 12.500 4 7H1.500z" fill="#ffe27a" stroke="#c09a2c" /></Icon></button>
        <span className="mx-[9px] h-5 w-px bg-[#8a94a6]" />
        <button aria-label="Property pages" className="-ml-[3px]"><Icon w={16} h={15}><path d="M.5.500h15v14H.5z" fill="#c9cbce" stroke="#a7aaaf" /><path d="M2.500 4.500h11v8h-11zM4 7.500h3M4 10h3M9 7.500h3M9 10h3" stroke="#8e9197" fill="#dedfe1" /></Icon></button>
      </div>
      <PropertyGrid />
    </div>
  </aside>
);

/* ---------- conditions dialog ---------- */

const Separator = () => <span className="h-[18px] w-px shrink-0 bg-[#9a9a9a]" />;

const DropButton = ({ label, className = '', children }) => (
  <button
    aria-label={label}
    className={`flex h-[21px] shrink-0 items-center rounded-xs border border-[#6f6f6f] bg-linear-to-b from-[#eee] to-[#cfcfcf] text-[#23395f] ${className}`}
  >
    {children}
  </button>
);

const ConditionRow = () => {
  const [expression, setExpression] = useState('Head');
  const [enabled, setEnabled] = useState(false);

  return (
    <fieldset className="ml-[2px] mr-[2px] mt-px h-[170px] rounded-xs border border-[#bcbcbc] bg-[#f4f4f4] text-[11px] text-black shadow-[inset_1px_1px_0_#fff]">
      <div className="ml-[6px] h-7 border-b border-[#9c9c9c] pl-[41px] leading-7">
        <button>Add Level</button>
      </div>
      <div className="px-[11px] pt-[9px]">
        <label htmlFor="field-is" className="block pb-px pl-[3px] leading-4">Field Is</label>
        <div className="relative h-[21px] w-[104px]">
          <select id="field-is" className="h-full w-full appearance-none rounded-xs border border-[#6f6f6f] bg-linear-to-b from-[#f0f0f0] to-[#cfcfcf] pl-[3px]">
            <option>Expression</option>
          </select>
          <Icon w={7} h={4} className="absolute right-1 top-[9px]"><path d="M0 0h7v1H0zM1 1h5v1H1zM2 2h3v1H2zM3 3h1v1H3z" fill="#000" /></Icon>
        </div>
        <div className="mt-[3px] flex h-[19px] w-[523px] border border-[#a4a4a4] bg-white">
          <input
            aria-label="Expression"
            value={expression}
            onChange={e => setExpression(e.target.value)}
            className="min-w-0 flex-1 pl-1 outline-none"
          />
          <button aria-label="Edit expression" className="w-[17px] rounded-xs border border-[#6f6f6f] bg-[#e4e4e4] font-['Liberation_Serif',serif] text-xs font-bold italic leading-none">
            fx
          </button>
        </div>
      </div>
      <div className="mx-[6px] mt-[5px] h-px bg-[#9c9c9c]" />
      <div className="ml-[6px] mr-[5px] mt-[7px] flex gap-[5px]">
        <div className="flex h-[54px] w-[110px] shrink-0 items-center justify-center border border-[#9c9c9c] bg-white text-[11px] text-[#f00]">
          AaBbCcYyZz
        </div>
        <div className="min-w-0 flex-1">
          <div className="flex h-7 items-center border-b border-r border-[#cfcfcf] bg-linear-to-b from-[#fafafa] to-[#e8e8e8]">
            <span className="ml-[5px] h-[14px] w-[2px] shrink-0 bg-[repeating-linear-gradient(to_bottom,#6f6f6f_0_2px,transparent_2px_4px)]" />
            <button className="ml-[14px] w-[72px] shrink-0 whitespace-nowrap text-left">Change Font...</button>
            <span className="ml-[10px]"><Separator /></span>
            <span className="flex w-[71px] shrink-0 justify-around font-['Liberation_Serif',serif] text-sm font-bold">
              <button>B</button>
              <button className="italic">I</button>
              <button className="underline">U</button>
            </span>
            <Separator />
            <button aria-label="Text color" className="ml-1 flex shrink-0 items-center gap-1">
              <span className="flex w-[18px] flex-col items-center border-b-4 border-[#f00] font-['Liberation_Serif',serif] text-base font-bold leading-[14px] text-[#3a5690]">A</span>
              <Caret color="#000" />
            </button>
            <button aria-label="Fill color" className="ml-[6px] flex shrink-0 items-center gap-1">
              <BucketIcon line="#ffffff" />
              <Caret color="#000" />
            </button>
            <span className="ml-1"><Separator /></span>
            <DropButton label="Border" className="ml-1 w-[92px] pr-[2px]">
              <span className="flex-1 pr-3 text-center">Border</span>
              <Caret />
            </DropButton>
            <span className="mx-[2px]"><Separator /></span>
            <DropButton label="Icon set" className="ml-[2px] w-10 justify-between pl-[5px] pr-[2px]">
              <Icon w={14} h={14} crisp={false}>
                <circle cx="2" cy="2" r="2" fill="#2bb673" />
                <circle cx="2" cy="7" r="2" fill="#2bb673" />
                <circle cx="2" cy="12" r="2" fill="#f0543c" />
                <path d="M6 2h8M6 7h8M6 12h8" stroke="#98a0aa" strokeWidth="1.500" />
              </Icon>
              <Caret />
            </DropButton>
            <span className="mx-[3px]"><Separator /></span>
            <button className="h-5 w-[88px] shrink-0 whitespace-nowrap border border-[#7a7a7a] bg-white">Select Style</button>
            <Caret color="#000" className="ml-[3px]" />
          </div>
          <label className="ml-px flex items-center gap-1 pt-[5px] leading-4">
            <input
              type="checkbox"
              checked={enabled}
              onChange={e => setEnabled(e.target.checked)}
              className="size-[13px] appearance-none border border-[#8c8c8c] bg-linear-to-br from-[#c8ccd4] to-white shadow-[inset_0_0_0_2px_#f4f4f4]"
            />
            Component is Enabled
          </label>
        </div>
      </div>
    </fieldset>
  );
};

const ConditionsDialog = () => (
  <section
    role="dialog"
    aria-label="Conditions"
    className="absolute left-[207px] top-[530px] flex h-[300px] w-[655px] flex-col rounded-t-md border border-[#6a5a50] bg-linear-to-b from-[#f9d3b4] via-[#fdd3ae] to-[#fbd9b5] px-[5px] font-['Open_Sans',sans-serif] shadow-[0_0_4px_#0007]"
  >
    <div className="relative flex h-[27px] shrink-0 items-center">
      <div className="pointer-events-none absolute inset-0 overflow-hidden">
        <div className="absolute left-0 top-1 h-6 w-36 bg-[#fdebc4] blur-md" />
        <div className="absolute left-[88px] top-2 h-2 w-20 bg-[#dc9f84] opacity-60 blur-[3px]" />
        <div className="absolute left-[270px] top-1 h-6 w-80 bg-[#fde9c4] blur-md" />
        <div className="absolute left-[275px] top-[14px] h-2 w-20 bg-[#dc9f84] opacity-60 blur-[3px]" />
        <div className="absolute left-[374px] top-2 h-2 w-20 bg-[#dc9f84] opacity-60 blur-[3px]" />
        <div className="absolute left-[470px] top-2 h-2 w-16 bg-[#dc9f84] opacity-60 blur-[3px]" />
        <div className="absolute left-[542px] top-1 h-6 w-7 bg-[#f4f0bd] blur-sm" />
        <div className="absolute left-[578px] top-1 h-6 w-10 bg-[#ddb0a4] blur-md" />
      </div>
      <span className="relative ml-px"><AppIcon /></span>
      <h2 className="relative ml-[5px] flex-1 text-xs text-black">Conditions</h2>
      <button aria-label="Close dialog" className="relative flex h-[18px] w-[47px] items-center justify-center self-start rounded-b border border-t-0 border-[#a08c7f] bg-[#f6dccb]/60">
        <CloseGlyph />
      </button>
    </div>
    <div className="flex flex-1 flex-col border border-b-0 border-[#6b625c] bg-[#efefef]">
      <div className="flex h-[31px] shrink-0 items-center pl-1 text-xs text-black">
        <span className="h-5 w-[2px] bg-[repeating-linear-gradient(to_bottom,#8fa3bd_0_2px,transparent_2px_5px)]" />
        <button className="ml-[6px] flex items-center gap-1">
          <Icon w={17} h={16} crisp={false}>
            <path d="M3 0v6M0 3h6M1 1l4 4M5 1L1 5" stroke="#e8c542" />
            <path d="M4 8c1-5 11-4 12 2 0 5-6 6-8 4s1-3-1-4-3 0-3-2z" fill="#ecc24a" stroke="#a07a1e" />
            <path d="M8 6h2v2H8z" fill="#c33" />
            <path d="M11 10h3v3h-3z" fill="#2a9a3a" />
            <path d="M11 6h2v2h-2z" fill="#36c" />
          </Icon>
          Add Condition
        </button>
        <Caret color="#000" className="ml-[9px]" />
        <button className="ml-2 flex items-center gap-[5px]">
          <Icon w={15} h={15} crisp={false}><path d="M1 0c4 5 9 10 13 14M14 2C9 5 4 9 0 14" stroke="#3c3c3c" strokeWidth="1.800" /></Icon>
          Remove Condition
        </button>
        <span className="ml-1 h-4 w-px bg-[#8f8f8f]" />
        <button aria-label="Move up" className="ml-[7px]"><Icon w={11} h={8} crisp={false}><path d="M5.500 0L11 5H8.500v3h-6V5H0z" fill="#3f7ff0" /></Icon></button>
        <button aria-label="Move down" className="ml-[13px]"><Icon w={11} h={8} crisp={false}><path d="M5.500 8L11 3H8.500V0h-6v3H0z" fill="#3f7ff0" /></Icon></button>
      </div>
      <div className="ml-1 mr-[5px] flex-1 border border-b-0 border-[#bcbcbc] font-['Liberation_Sans',Arial,sans-serif]">
        <ConditionRow />
      </div>
    </div>
  </section>
);

/* hand-drawn pen marks over the windows */
const PenMarks = () => (
  <svg className="pointer-events-none absolute left-0 top-0" width="1212" height="790" viewBox="0 0 1212 790" fill="none" stroke="#0000ff" strokeWidth="3" strokeLinecap="round" strokeLinejoin="round" aria-hidden="true">
    <path d="M744 448.500c15 0 32 0 45 1 20 3 44 9 69 13 13 2 22 4 30 8 14 5 25 10 33 15l9 8 5 14 24 29 2 6 15 14 7 9" />
    <path d="M975.500 547l7.500 17-14-3" />
    <path d="M357 732l-5-2-12 3-11 5 1 8 4 8 8 5 10 3 12-1 8-2 3-6-4-8-8-6-14-4" strokeWidth="4" />
  </svg>
);

const App = () => (
  <div className="relative flex h-screen w-full flex-col overflow-hidden bg-linear-to-r from-[#fce2c9] via-[#fdf0cf] to-[#f8efc9] font-['Liberation_Sans',Arial,sans-serif] text-[11px]">
    <TitleBar />
    <div className="ml-[5px] mr-[7px] flex min-h-0 flex-1 flex-col border-x border-t border-[#5a5a62] bg-[#dfe8f5]">
      <Ribbon />
      <div className="flex min-h-0 flex-1">
        <Toolbox />
        <DesignSurface />
        <PropertiesPanel />
      </div>
    </div>
    <ConditionsDialog />
    <PenMarks />
  </div>
);

export default App;
